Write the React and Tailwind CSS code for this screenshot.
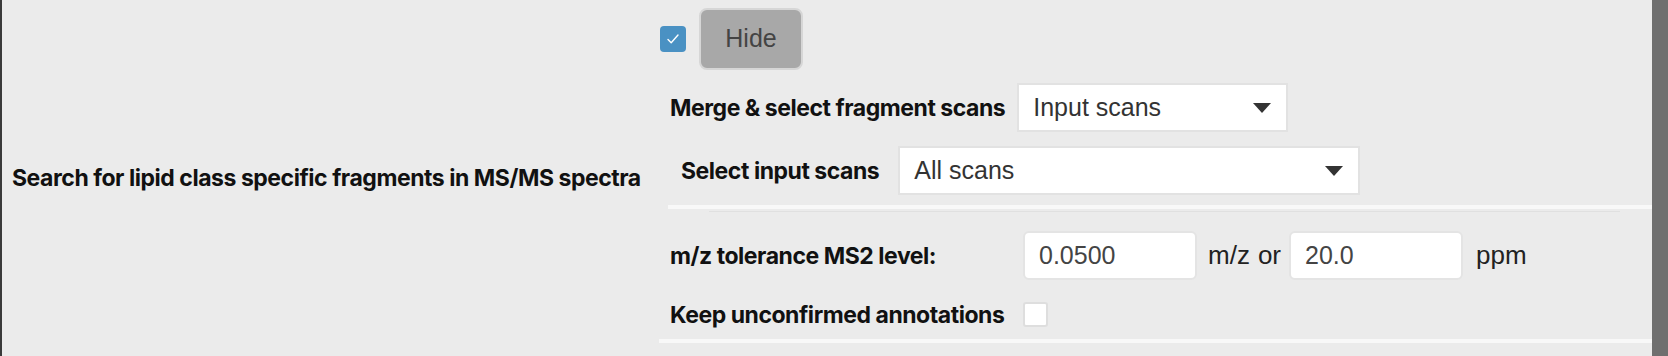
import React from 'react'

const labelCls = "font-['Inter',sans-serif] text-[23px] leading-[28px] font-bold tracking-[-0.02em] text-[#111]"

const Caret = () => (
    <svg width="18" height="10" viewBox="0 0 18 10" className="shrink-0">
        <path d="M0 0 L18 0 L9 10 Z" fill="#333" />
    </svg>
)

const Select = ({ value, width }) => (
    <div className={`flex h-[49px] items-center justify-between border-2 border-[#e2e2e2] bg-white pl-[14px] pr-[15px] ${width}`}>
        <span className="text-[25px] text-[#333]">{value}</span>
        <Caret />
    </div>
)

const NumberInput = ({ value }) => (
    <input
        readOnly
        value={value}
        className="h-[49px] w-[174px] rounded-[6px] border-2 border-[#e4e4e4] bg-white px-[14px] text-[25px] text-[#444] outline-none"
    />
)

export default function App() {
    return (
        <div className="flex h-[356px] w-full bg-[#ebebeb] font-['Liberation_Sans',sans-serif] text-[#222]">
            <div className="w-[2px] bg-[#3a3a3a]" />

            <div className="flex w-[657px] items-center pl-[10px]">
                <span className={labelCls}>
                    Search for lipid class specific fragments in MS/MS spectra
                </span>
            </div>

            <div className="flex flex-1 flex-col pt-[8px]">
                <div className="flex h-[62px] items-center gap-[13px] pl-[1px]">
                    <div className="flex h-[26px] w-[26px] items-center justify-center rounded-[4px] bg-[#4a91c3]">
                        <svg width="14" height="12" viewBox="0 0 14 12">
                            <path d="M2 6.5 L5.2 9.8 L12 2" fill="none" stroke="white" strokeWidth="1.4" strokeLinecap="round" strokeLinejoin="round" />
                        </svg>
                    </div>
                    <button className="flex h-[62px] w-[104px] items-center justify-center rounded-[8px] border-2 border-[#d6d6d6] bg-[#a8a8a8] text-[25px] text-[#444]">
                        Hide
                    </button>
                </div>

                <div className="mt-[13px] flex items-center gap-[12px] pl-[11px]">
                    <span className={labelCls}>Merge &amp; select fragment scans</span>
                    <Select value="Input scans" width="w-[271px]" />
                </div>

                <div className="mt-[14px] flex items-center gap-[19px] pl-[22px]">
                    <span className={labelCls}>Select input scans</span>
                    <Select value="All scans" width="w-[462px]" />
                </div>

                <div className="ml-[9px] mt-[10px] h-[4px] bg-[#f8f8f8]" />
                <div className="ml-[50px] mr-[32px] mt-[2px] h-[1px] bg-[#e0e0e0]" />

                <div className="mt-[19px] flex items-center pl-[11px]">
                    <span className={`w-[353px] ${labelCls}`}>m/z tolerance MS2 level:</span>
                    <NumberInput value="0.0500" />
                    <span className="ml-[11px] text-[26px]">m/z</span>
                    <span className="ml-[8px] text-[26px]">or</span>
                    <div className="ml-[8px]">
                        <NumberInput value="20.0" />
                    </div>
                    <span className="ml-[13px] text-[26px]">ppm</span>
                </div>

                <div className="mt-[22px] flex h-[25px] items-center pl-[11px]">
                    <span className={`w-[353px] ${labelCls}`}>Keep unconfirmed annotations</span>
                    <div className="h-[25px] w-[25px] rounded-[3px] border-2 border-[#dedede] bg-white" />
                </div>

                <div className="mt-[12px] h-[4px] bg-[#f8f8f8]" />
            </div>

            <div className="w-[16px] bg-[#6f6f6f]" />
        </div>
    )
}
